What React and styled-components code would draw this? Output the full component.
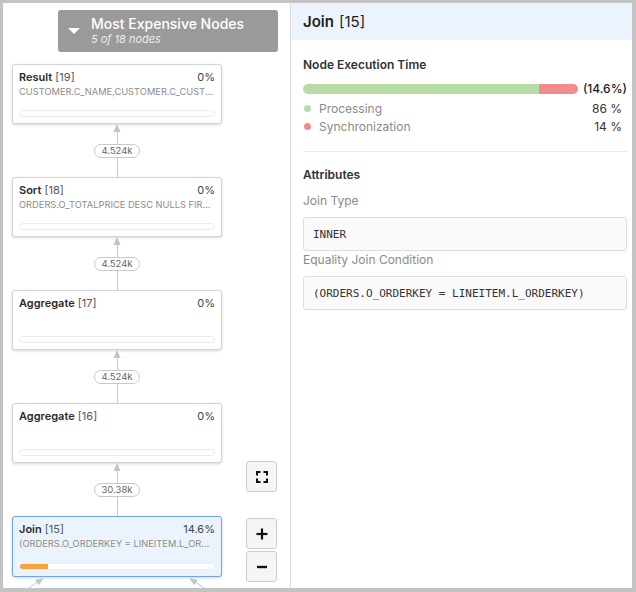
import React from 'react';
import styled, { createGlobalStyle } from 'styled-components';

const Global = createGlobalStyle`
  html, body { margin: 0; padding: 0; background: #c3c3c3; }
  body { font-family: Inter, "Noto Sans", sans-serif; color: #333; }
  * { box-sizing: border-box; }
`;

const Frame = styled.div`
  width: 636px;
  height: 592px;
  padding: 3px 4px 4px 3px;
  background: #c3c3c3;
`;

const Window = styled.div`
  display: flex;
  width: 100%;
  height: 100%;
  background: #fff;
  overflow: hidden;
`;

/* ---------- Left: plan canvas ---------- */

const Canvas = styled.div`
  position: relative;
  flex: none;
  width: 288px;
  height: 100%;
  border-right: 1px solid #dcdcdc;
  padding: 7px 0 0 9px;
  overflow: hidden;
  display: flex;
  flex-direction: column;
  align-items: flex-start;
`;

const Picker = styled.div`
  flex: none;
  width: 220px;
  height: 42px;
  margin: 0 0 12px 46px;
  background: #9a9a9a;
  border-radius: 3px;
  display: flex;
  align-items: flex-start;
  padding: 5px 0 0 10px;
`;

const Caret = styled.span`
  width: 0;
  height: 0;
  margin-top: 13px;
  border-left: 6px solid transparent;
  border-right: 6px solid transparent;
  border-top: 6px solid #fff;
`;

const PickerText = styled.div`
  margin-left: 11px;
  display: flex;
  flex-direction: column;
`;

const PickerTitle = styled.span`
  font-size: 14px;
  line-height: 17px;
  font-weight: 500;
  color: #fff;
`;

const PickerSub = styled.span`
  font-size: 11px;
  line-height: 14px;
  font-style: italic;
  color: #ececec;
`;

const Card = styled.div`
  width: 210px;
  height: ${p => (p.$selected ? '61px' : '60px')};
  flex: none;
  border: 1px solid ${p => (p.$selected ? '#6fa6e8' : '#d3d3d3')};
  background: ${p => (p.$selected ? '#ebf3fd' : '#fff')};
  border-radius: 3px;
  box-shadow: 0 1px 3px rgba(0, 0, 0, 0.16);
  padding: 5px 6px 6px 6px;
  display: flex;
  flex-direction: column;
`;

const CardTitleRow = styled.div`
  display: flex;
  justify-content: space-between;
  font-size: 11px;
  line-height: 14px;
  color: #333;
`;

const OpName = styled.span`
  font-weight: 600;
  color: #2b2b2b;
`;

const OpId = styled.span`
  color: #555;
`;

const Pct = styled.span`
  color: #444;
`;

const CardSub = styled.div`
  margin-top: 2px;
  font-size: 9.3px;
  line-height: 12px;
  color: #8c8c8c;
  white-space: nowrap;
  overflow: hidden;
  text-overflow: ellipsis;
`;

const CardBar = styled.div`
  margin-top: auto;
  height: 7px;
  border: 1px solid #ececec;
  border-radius: 4px;
  background: #fff;
  overflow: hidden;
`;

const CardBarFill = styled.div`
  height: 100%;
  background: #f7a33b;
`;

const Edge = styled.div`
  width: 210px;
  height: 53px;
  flex: none;
  display: flex;
  flex-direction: column;
  align-items: center;
`;

const EdgeLine = styled.div`
  width: 1px;
  background: #c9c9c9;
  height: ${p => p.$h || 'auto'};
  flex: ${p => (p.$grow ? 1 : 'none')};
`;

const EdgeLabel = styled.div`
  flex: none;
  width: 46px;
  height: 14px;
  border: 1px solid #c9c9c9;
  border-radius: 7px;
  background: #fff;
  font-size: 9.5px;
  line-height: 12px;
  text-align: center;
  color: #666;
`;

const Fanout = styled.svg`
  flex: none;
  display: block;
`;

const ToolButton = styled.button`
  position: absolute;
  left: 243px;
  top: ${p => p.$top}px;
  width: 31px;
  height: 31px;
  padding: 0;
  border: 1px solid #cccccc;
  border-radius: 3px;
  background: #f5f5f5;
  display: flex;
  align-items: center;
  justify-content: center;
`;

/* ---------- Right: details ---------- */

const Details = styled.div`
  flex: 1;
  display: flex;
  flex-direction: column;
  min-width: 0;
`;

const DetailsHeader = styled.div`
  height: 37px;
  flex: none;
  background: #ebf4fe;
  padding-left: 12px;
  display: flex;
  align-items: center;
  font-size: 15px;
  color: #1e1e1e;
`;

const HeaderName = styled.span`
  font-weight: 600;
  margin-right: 5px;
`;

const DetailsBody = styled.div`
  padding: 17px 5px 0 12px;
  display: flex;
  flex-direction: column;
`;

const SectionTitle = styled.div`
  font-size: 12px;
  line-height: 16px;
  font-weight: 600;
  color: #333;
`;

const TimeRow = styled.div`
  margin-top: 8px;
  height: 16px;
  display: flex;
  align-items: center;
`;

const TimeBar = styled.div`
  width: 277px;
  height: 10px;
  border-radius: 5px;
  overflow: hidden;
  display: flex;
`;

const TimeSeg = styled.div`
  height: 100%;
  background: ${p => p.$color};
`;

const TimeTotal = styled.span`
  margin-left: 5px;
  font-size: 12px;
  line-height: 16px;
  font-weight: 500;
  color: #222;
`;

const LegendList = styled.div`
  margin-top: 2px;
  display: flex;
  flex-direction: column;
`;

const LegendRow = styled.div`
  display: flex;
  align-items: center;
  height: 18px;
  font-size: 12px;
  padding-right: 5px;
`;

const Dot = styled.span`
  width: 7px;
  height: 7px;
  border-radius: 50%;
  margin: 0 8px 0 1px;
  background: ${p => p.$color};
`;

const LegendName = styled.span`
  color: #8a8a8a;
  flex: 1;
`;

const LegendValue = styled.span`
  color: #333;
`;

const Divider = styled.div`
  margin: 16px 0 15px;
  height: 1px;
  background: #ebebeb;
`;

const FieldLabel = styled.div`
  font-size: 12px;
  line-height: 16px;
  color: #8a8a8a;
  margin: ${p => (p.$first ? '10px' : '1px')} 0 8px;
`;

const Field = styled.div`
  height: 34px;
  border: 1px solid #dddddd;
  border-radius: 3px;
  background: #fafafa;
  padding: 0 9px;
  display: flex;
  align-items: center;
  font-family: "DejaVu Sans Mono", "Liberation Mono", monospace;
  font-size: 11px;
  color: #333;
`;

/* ---------- data ---------- */

const nodes = [
  { name: 'Result', id: 19, pct: '0%', sub: 'CUSTOMER.C_NAME,CUSTOMER.C_CUSTKEY,ORDERS.O_ORDERKEY', rows: '4.524k' },
  { name: 'Sort', id: 18, pct: '0%', sub: 'ORDERS.O_TOTALPRICE DESC NULLS FIRST, ORDERS.O_ORDERDATE', rows: '4.524k' },
  { name: 'Aggregate', id: 17, pct: '0%', sub: '', rows: '4.524k' },
  { name: 'Aggregate', id: 16, pct: '0%', sub: '', rows: '30.38k' },
  { name: 'Join', id: 15, pct: '14.6%', sub: '(ORDERS.O_ORDERKEY = LINEITEM.L_ORDERKEY)', fill: 14.6, selected: true },
];

const Arrow = () => (
  <svg width="8" height="8" viewBox="0 0 8 8" style={{ display: 'block', flex: 'none' }}>
    <polygon points="4,0 7.5,8 0.5,8" fill="#c4c4c4" />
  </svg>
);

function PlanNode({ n }) {
  return (
    <Card $selected={n.selected}>
      <CardTitleRow>
        <span>
          <OpName>{n.name}</OpName> <OpId>[{n.id}]</OpId>
        </span>
        <Pct>{n.pct}</Pct>
      </CardTitleRow>
      {n.sub ? <CardSub>{n.sub}</CardSub> : null}
      <CardBar>
        {n.fill ? <CardBarFill style={{ width: `${n.fill}%` }} /> : null}
      </CardBar>
    </Card>
  );
}

function PlanEdge({ rows }) {
  return (
    <Edge>
      <Arrow />
      <EdgeLine $h="12px" />
      <EdgeLabel>{rows}</EdgeLabel>
      <EdgeLine $grow />
    </Edge>
  );
}

export default function App() {
  return (
    <>
      <Global />
      <Frame>
        <Window>
          <Canvas>
            <Picker>
              <Caret />
              <PickerText>
                <PickerTitle>Most Expensive Nodes</PickerTitle>
                <PickerSub>5 of 18 nodes</PickerSub>
              </PickerText>
            </Picker>
            {nodes.map((n, i) => (
              <React.Fragment key={i}>
                <PlanNode n={n} />
                {n.rows ? <PlanEdge rows={n.rows} /> : null}
              </React.Fragment>
            ))}
            <Fanout width="210" height="24" viewBox="0 0 210 24">
              <line x1="29" y1="3" x2="0" y2="22" stroke="#c4c4c4" strokeWidth="1" />
              <polygon points="32,1 23,3 27,8" fill="#c4c4c4" />
              <line x1="180" y1="3" x2="209" y2="22" stroke="#c4c4c4" strokeWidth="1" />
              <polygon points="177,1 186,3 182,8" fill="#c4c4c4" />
            </Fanout>

            <ToolButton $top={458} aria-label="Fit">
              <svg width="12" height="12" viewBox="0 0 12 12" fill="none" stroke="#111" strokeWidth="2">
                <path d="M1 4.5V1H4.5" />
                <path d="M7.5 1H11V4.5" />
                <path d="M11 7.5V11H7.5" />
                <path d="M4.5 11H1V7.5" />
              </svg>
            </ToolButton>
            <ToolButton $top={515} aria-label="Zoom in">
              <svg width="12" height="12" viewBox="0 0 12 12" stroke="#111" strokeWidth="2.2">
                <line x1="0.5" y1="6" x2="11.5" y2="6" />
                <line x1="6" y1="0.5" x2="6" y2="11.5" />
              </svg>
            </ToolButton>
            <ToolButton $top={548} aria-label="Zoom out">
              <svg width="12" height="12" viewBox="0 0 12 12" stroke="#111" strokeWidth="2.4">
                <line x1="1" y1="6" x2="11" y2="6" />
              </svg>
            </ToolButton>
          </Canvas>

          <Details>
            <DetailsHeader>
              <HeaderName>Join</HeaderName>[15]
            </DetailsHeader>
            <DetailsBody>
              <SectionTitle>Node Execution Time</SectionTitle>
              <TimeRow>
                <TimeBar>
                  <TimeSeg $color="#b7dca3" style={{ width: '86%' }} />
                  <TimeSeg $color="#f28c8c" style={{ width: '14%' }} />
                </TimeBar>
                <TimeTotal>(14.6%)</TimeTotal>
              </TimeRow>
              <LegendList>
                <LegendRow>
                  <Dot $color="#b7dca3" />
                  <LegendName>Processing</LegendName>
                  <LegendValue>86 %</LegendValue>
                </LegendRow>
                <LegendRow>
                  <Dot $color="#f28c8c" />
                  <LegendName>Synchronization</LegendName>
                  <LegendValue>14 %</LegendValue>
                </LegendRow>
              </LegendList>
              <Divider />
              <SectionTitle>Attributes</SectionTitle>
              <FieldLabel $first>Join Type</FieldLabel>
              <Field>INNER</Field>
              <FieldLabel>Equality Join Condition</FieldLabel>
              <Field>(ORDERS.O_ORDERKEY = LINEITEM.L_ORDERKEY)</Field>
            </DetailsBody>
          </Details>
        </Window>
      </Frame>
    </>
  );
}
